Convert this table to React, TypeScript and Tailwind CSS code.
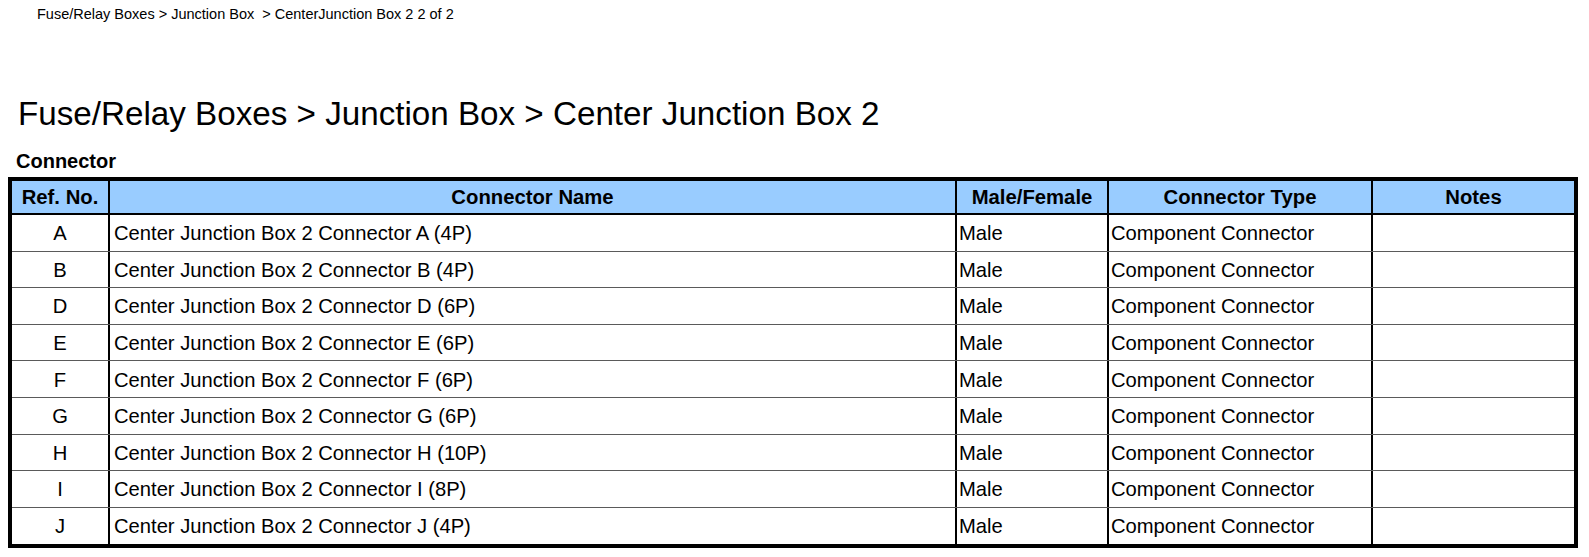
import React from 'react';

interface Row {
  ref: string;
  name: string;
  gender: string;
  type: string;
  notes: string;
}

const rows: Row[] = [
  { ref: 'A', name: 'Center Junction Box 2 Connector A (4P)', gender: 'Male', type: 'Component Connector', notes: '' },
  { ref: 'B', name: 'Center Junction Box 2 Connector B (4P)', gender: 'Male', type: 'Component Connector', notes: '' },
  { ref: 'D', name: 'Center Junction Box 2 Connector D (6P)', gender: 'Male', type: 'Component Connector', notes: '' },
  { ref: 'E', name: 'Center Junction Box 2 Connector E (6P)', gender: 'Male', type: 'Component Connector', notes: '' },
  { ref: 'F', name: 'Center Junction Box 2 Connector F (6P)', gender: 'Male', type: 'Component Connector', notes: '' },
  { ref: 'G', name: 'Center Junction Box 2 Connector G (6P)', gender: 'Male', type: 'Component Connector', notes: '' },
  { ref: 'H', name: 'Center Junction Box 2 Connector H (10P)', gender: 'Male', type: 'Component Connector', notes: '' },
  { ref: 'I', name: 'Center Junction Box 2 Connector I (8P)', gender: 'Male', type: 'Component Connector', notes: '' },
  { ref: 'J', name: 'Center Junction Box 2 Connector J (4P)', gender: 'Male', type: 'Component Connector', notes: '' },
];

const cols = 'grid grid-cols-[98px_847px_152px_264px_201px]';

export default function App() {
  return (
    <div className="w-[1589px] h-[557px] bg-white text-black overflow-hidden font-['Liberation_Sans',Arial,sans-serif]">
      {/* running header */}
      <div className="pt-[5px] pl-[37px] text-[14.5px] leading-[18px] whitespace-pre">
        Fuse/Relay Boxes &gt; Junction Box  &gt; CenterJunction Box 2 2 of 2
      </div>

      <h1 className="mt-[72px] pl-[18px] text-[33.2px] leading-[38px] font-normal">
        Fuse/Relay Boxes &gt; Junction Box &gt; Center Junction Box 2
      </h1>

      <div className="mt-[16px] pl-[16px] text-[20px] leading-[24px] font-bold">Connector</div>

      <div className="mt-[4px] ml-[8px] w-[1570px] border-4 border-black">
        {/* header row */}
        <div className={`${cols} h-[34px] bg-[#99ccff] border-b-2 border-black font-bold text-[20.3px]`}>
          <div className="flex items-center justify-center border-r-2 border-black">Ref. No.</div>
          <div className="flex items-center justify-center border-r-2 border-black">Connector Name</div>
          <div className="flex items-center justify-center border-r-2 border-black">Male/Female</div>
          <div className="flex items-center justify-center border-r-2 border-black">Connector Type</div>
          <div className="flex items-center justify-center">Notes</div>
        </div>

        {rows.map((r, i) => (
          <div
            key={r.ref}
            className={`${cols} h-[36.6px] text-[20.2px] ${i < rows.length - 1 ? 'border-b border-[#5a5a5a]' : ''}`}
          >
            <div className="flex items-center justify-center pt-[1px] border-r-2 border-black">{r.ref}</div>
            <div className="flex items-center pt-[1px] pl-[4px] border-r-2 border-black">{r.name}</div>
            <div className="flex items-center pt-[1px] pl-[2px] border-r-2 border-black">{r.gender}</div>
            <div className="flex items-center pt-[1px] pl-[2px] border-r-2 border-black">{r.type}</div>
            <div className="flex items-center pt-[1px] pl-[2px]">{r.notes}</div>
          </div>
        ))}
      </div>
    </div>
  );
}
